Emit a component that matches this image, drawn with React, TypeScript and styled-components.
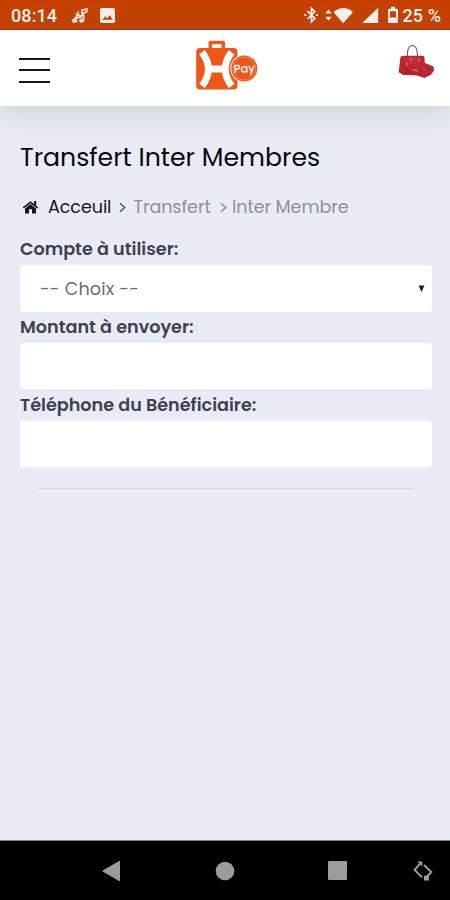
import React from "react";
import styled, { createGlobalStyle } from "styled-components";

const GlobalStyle = createGlobalStyle`
  * { box-sizing: border-box; }
  html, body { margin: 0; padding: 0; }
  body {
    font-family: Poppins, Inter, sans-serif;
    background: #e9ecf4;
    overflow: hidden;
  }
`;

const Screen = styled.div`
  display: flex;
  flex-direction: column;
  width: 450px;
  height: 900px;
  background: #e9ecf4;
`;

const StatusBar = styled.div`
  display: flex;
  align-items: center;
  flex: none;
  height: 30px;
  padding: 2px 9px 0 11px;
  background: #c74000;
  border-bottom: 1px solid #b92300;
  color: #fff4ee;
  font-family: Roboto, sans-serif;
  font-size: 18px;
  font-weight: 500;
  svg { display: block; flex: none; }
`;

const Clock = styled.span`
  width: 60px;
  letter-spacing: 0.1px;
`;

const Notifications = styled.div`
  display: flex;
  align-items: center;
  gap: 12px;
  flex: 1;
`;

const Signals = styled.div`
  display: flex;
  align-items: center;
`;

const SignalIcons = styled.svg`
  margin-bottom: 2px;
`;

const Battery = styled.span`
  margin-left: 4px;
  letter-spacing: 0.1px;
  white-space: nowrap;
`;

const Header = styled.header`
  display: grid;
  grid-template-columns: 1fr auto 1fr;
  align-items: start;
  flex: none;
  height: 76px;
  padding: 10px 15px 0 19px;
  background: #fff;
  box-shadow: 0 3px 32px rgba(100, 115, 120, 0.27);
  svg { display: block; }
`;

const MenuButton = styled.button`
  display: flex;
  flex-direction: column;
  gap: 9.4px;
  width: 31px;
  margin-top: 18px;
  padding: 0;
  border: 0;
  background: none;
`;

const MenuLine = styled.span`
  height: 2px;
  background: #15161a;
`;

const CartButton = styled.button`
  justify-self: end;
  margin-top: 3px;
  padding: 0;
  border: 0;
  background: none;
`;

const Content = styled.main`
  flex: 1;
  padding: 34px 18px 0 20px;
`;

const Title = styled.h1`
  margin: 0;
  color: #08090b;
  font-size: 25.2px;
  font-weight: 400;
  line-height: 36px;
  white-space: nowrap;
`;

const Breadcrumb = styled.nav`
  display: flex;
  align-items: center;
  height: 28px;
  margin-top: 17px;
  padding-left: 2px;
  font-size: 17.6px;
  white-space: nowrap;
`;

const Crumb = styled.span<{ $current?: boolean; $width: number }>`
  width: ${(p) => p.$width}px;
  color: ${(p) => (p.$current ? "#16171b" : "#8f9195")};
  font-weight: 400;
  letter-spacing: -0.1px;
`;

const HomeSlot = styled.span`
  display: flex;
  width: 26px;
`;

const Chevron = styled.svg<{ $end: number; $start: number }>`
  flex: none;
  width: 7px;
  height: 11px;
  margin: 0 ${(p) => p.$end}px 0 ${(p) => p.$start}px;
`;

const Form = styled.form`
  display: flex;
  flex-direction: column;
  padding-top: 13px;
`;

const Label = styled.label`
  height: 31px;
  color: #3f4152;
  font-size: 17.6px;
  font-weight: 600;
  line-height: 31px;
  white-space: nowrap;
`;

const FieldBox = styled.div`
  height: 47px;
  display: flex;
  align-items: center;
  justify-content: space-between;
  padding: 0 7px 0 20px;
  border-radius: 4px;
  background: #fff;
  color: #6c6e72;
  font-size: 17.6px;
  font-weight: 400;
  letter-spacing: 0.18px;
`;

const Input = styled.input`
  height: 46px;
  width: 100%;
  margin: 0 0 1px;
  padding: 0 20px;
  border: 0;
  border-radius: 4px;
  background: #fff;
  font: inherit;
`;

const Divider = styled.hr`
  width: calc(100% - 35px);
  height: 1px;
  margin: 20px 17px 0 18px;
  border: 0;
  background: #d7dbe0;
`;

const NavigationBar = styled.footer`
  display: flex;
  align-items: center;
  flex: none;
  height: 60px;
  padding: 0 16px 0 101px;
  border-top: 1px solid #858788;
  background: #000;
  svg { display: block; flex: none; }
`;

const NavSlot = styled.div<{ $width: number }>`
  width: ${(p) => p.$width}px;
`;

const MusicNote = () => (
  <svg width="17" height="16" viewBox="0 0 17 16">
    <path d="M7.2 3.2v2M4.6 5.6l1.4 1" stroke="#ffe9dd" strokeWidth="1.4" />
    <path d="M2.5 12.5 7.4 6l1.4 2.4 2.3-1V2.2L15.8 1v2.7L12.6 5v8" fill="none" stroke="#ffe9dd" strokeWidth="1.7" />
    <ellipse cx="3.6" cy="12.7" rx="2.8" ry="2" fill="#ffe9dd" />
    <ellipse cx="10.6" cy="12.7" rx="2.4" ry="2.1" fill="#ffe9dd" />
    <path d="m4 10.4 7-1.6" stroke="#ffe9dd" strokeWidth="1.8" />
  </svg>
);

const Picture = () => (
  <svg width="15" height="15" viewBox="0 0 15 15">
    <rect width="15" height="15" rx="1.8" fill="#fff0e8" />
    <path d="m2.5 11.7 2.8-3.5 1.9 2.2 2.5-3.2 3 4.5z" fill="#c74000" />
  </svg>
);

const StatusSignals = () => (
  <SignalIcons width="94" height="18" viewBox="0 0 94 18" fill="#fff4ee">
    <path d="m3.5 5.2 7.4 7.4-3.5 3.3V2.4l3.5 3.2-7.4 7.4" fill="none" stroke="#fff4ee" strokeWidth="1.7" />
    <path d="M.3 8h2v2h-2zM12 8h2v2h-2z" />
    <path d="m24.5 3.4 3.2 4h-6.4zM24.5 14.8l-3.2-4h6.4z" />
    <path d="M29.5 6.2q10-8.4 19.4 0L39.2 17.2z" />
    <path d="M58.2 17 74.2 1.8V17z" />
    <path fillRule="evenodd" d="M87 .8h4v2h2a.9.9 0 0 1 .9.9V16a.9.9 0 0 1-.9.9h-8a.9.9 0 0 1-.9-.9V3.7a.9.9 0 0 1 .9-.9h2zM86 5.2v6.2h6V5.2z" />
  </SignalIcons>
);

const BrandMark = styled.svg`
  text {
    font-family: Poppins, Inter, sans-serif;
    font-size: 11.5px;
    font-weight: 500;
  }
`;

const Logo = () => (
  <BrandMark width="62" height="50" viewBox="0 0 62 50" role="img" aria-label="H Pay">
    <path d="M14.3 8V2.5h13V8" fill="none" stroke="#ed5719" strokeWidth="3.5" strokeLinejoin="round" />
    <rect x="0.2" y="8" width="41.3" height="41.6" rx="4" fill="#ed5719" />
    <path d="M6 12.3C14.5 23 14.5 35 6 46M35.7 12.3C27.2 23 27.2 35 35.7 46" fill="none" stroke="#fff" strokeWidth="7" />
    <path d="M12 29h18" stroke="#fff" strokeWidth="7" />
    <circle cx="48.3" cy="28.5" r="14" fill="#fff" />
    <circle cx="48.3" cy="28.5" r="13" fill="#ed5719" />
    <circle cx="48.3" cy="28.5" r="11.5" fill="none" stroke="#f7a27c" strokeWidth="0.6" />
    <text x="37.8" y="32.5" fill="#fff" textLength="21" lengthAdjust="spacingAndGlyphs" transform="rotate(-3 48 29)">Pay</text>
  </BrandMark>
);

const Handbags = () => (
  <svg width="37" height="36" viewBox="0 0 37 36">
    <path d="M9.6 18C8.6 7 10.4 2.5 14.5 2.5S20 8 19.2 17" fill="none" stroke="#6b5f62" strokeWidth="1.1" />
    <path d="m2.5 13.7 3-1h18l2.8.8 1.2 15.6-3.4 3.5-19-.6L.7 29z" fill="#bd2431" />
    <path d="M3 14.3h23M8 13v18M21 13v9M1 29l22 2" stroke="#92202c" strokeWidth=".9" />
    <path d="m3.2 14 4.7 8 15-2.6 3-5" fill="#cb2f3c" opacity=".8" />
    <path d="m14 24.5 5-3 8-1.5 8.5 3.5.5 4-3 4.3-6.6 3.2-11.9-4.3z" fill="#bf2632" />
    <path d="m16 25 9 3 9.5-3.4M15 30l12 2.8 6-2.2" fill="none" stroke="#92202c" strokeWidth=".9" />
    <path d="m15 26.7 5 1.2M8.7 19.5v3.5M12 15l2 2" stroke="#d28078" strokeWidth="1.2" />
    <path d="M21 14.5v5M25 26l3 1" stroke="#df5961" strokeWidth="1.2" />
  </svg>
);

const Home = () => (
  <svg width="17" height="14" viewBox="0 0 17 14" fill="#16171b">
    <path d="m.7 7.3 7.8-6.1 3.6 2.8V1h2.1v4.7l2 1.6-1 1.2-6.7-5.3-6.8 5.3z" />
    <path d="m3 8.5 5.5-4.4L14 8.5v5h-4V9.3H7v4.2H3z" />
  </svg>
);

const Separator = ({ start, end, current }: { start: number; end: number; current?: boolean }) => (
  <Chevron $start={start} $end={end} viewBox="0 0 7 11">
    <path d="m1 1.3 4.7 4.2L1 9.7" fill="none" stroke={current ? "#4c4e52" : "#84868a"} strokeWidth="1.4" />
  </Chevron>
);

const SelectArrow = () => (
  <svg width="7" height="7" viewBox="0 0 7 7">
    <path d="M.5.4h6L3.8 6.5h-.6z" fill="#252527" />
  </svg>
);

export default function App() {
  return (
    <>
      <GlobalStyle />
      <Screen>
        <StatusBar>
          <Clock>08:14</Clock>
          <Notifications>
            <MusicNote />
            <Picture />
          </Notifications>
          <Signals>
            <StatusSignals />
            <Battery>25 %</Battery>
          </Signals>
        </StatusBar>
        <Header>
          <MenuButton aria-label="Menu">
            <MenuLine />
            <MenuLine />
            <MenuLine />
          </MenuButton>
          <Logo />
          <CartButton aria-label="Boutique">
            <Handbags />
          </CartButton>
        </Header>
        <Content>
          <Title>Transfert Inter Membres</Title>
          <Breadcrumb>
            <HomeSlot><Home /></HomeSlot>
            <Crumb $current $width={64}>Acceuil</Crumb>
            <Separator current start={7} end={7.5} />
            <Crumb $width={78}>Transfert</Crumb>
            <Separator start={8} end={5.5} />
            <Crumb $width={120}>Inter Membre</Crumb>
          </Breadcrumb>
          <Form>
            <Label>Compte à utiliser:</Label>
            <FieldBox role="combobox" aria-expanded={false}>
              <span>-- Choix --</span>
              <SelectArrow />
            </FieldBox>
            <Label htmlFor="amount">Montant à envoyer:</Label>
            <Input id="amount" />
            <Label htmlFor="phone">Téléphone du Bénéficiaire:</Label>
            <Input id="phone" />
            <Divider />
          </Form>
        </Content>
        <NavigationBar>
          <NavSlot $width={114}>
            <svg width="20" height="22" viewBox="0 0 20 22"><path d="M.8 11 19 .5v21z" fill="#9b9b9b" /></svg>
          </NavSlot>
          <NavSlot $width={112}>
            <svg width="20" height="20" viewBox="0 0 20 20"><circle cx="10" cy="10" r="9.3" fill="#9b9b9b" /></svg>
          </NavSlot>
          <NavSlot $width={86}>
            <svg width="21" height="21" viewBox="0 0 21 21"><rect x="1" y="1" width="19" height="19" rx="1.2" fill="#9b9b9b" /></svg>
          </NavSlot>
          <svg width="20" height="22" viewBox="0 0 20 22">
            <path d="m9 17.4-7.4-7.5L6.8 4M11 5l7.3 7-5 5.5" fill="none" stroke="#a0a0a0" strokeWidth="1.9" />
            <path d="M4.3 1.6h5v5zM11 15.8l4.9-.2v5H11z" fill="#a0a0a0" />
          </svg>
        </NavigationBar>
      </Screen>
    </>
  );
}
